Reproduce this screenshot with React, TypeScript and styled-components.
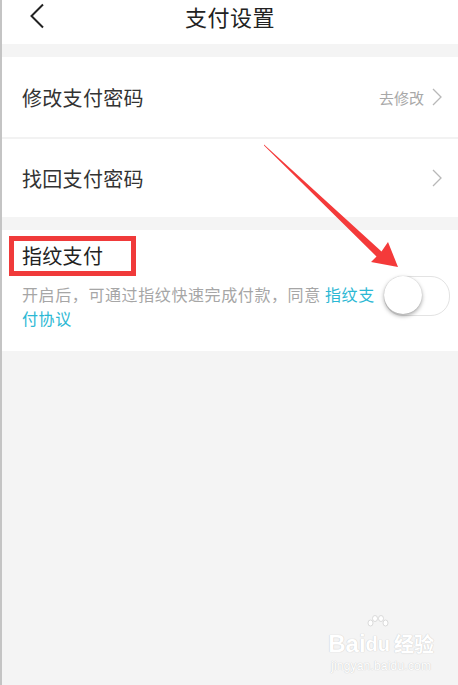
import React from "react";
import styled, { createGlobalStyle } from "styled-components";

const Global = createGlobalStyle`
  html, body { margin: 0; padding: 0; background: #f4f4f4; }
  body { font-family: "Noto Sans CJK SC", "Noto Sans", sans-serif; }
`;

const Page = styled.div`
  position: relative;
  width: 458px;
  height: 685px;
  background: #f4f4f4;
  border-left: 2px solid #c4c4c4;
  box-sizing: border-box;
  overflow: hidden;
`;

const Header = styled.header`
  height: 44px;
  box-sizing: border-box;
  padding-top: 2px;
  background: #fff;
  display: flex;
  align-items: flex-start;
  justify-content: center;
  position: relative;
`;

const BackButton = styled.div`
  position: absolute;
  left: 26px;
  top: 3px;
  width: 18px;
  height: 26px;
  display: flex;
`;

const Title = styled.h1`
  margin: 0;
  font-size: 22px;
  line-height: 28px;
  font-weight: 400;
  color: #222;
  letter-spacing: 0.5px;
`;

const Gap = styled.div<{ $h: number }>`
  height: ${(p) => p.$h}px;
`;

const Group = styled.section`
  background: #fff;
  display: flex;
  flex-direction: column;
`;

const Row = styled.div<{ $h: number; $divider?: boolean }>`
  height: ${(p) => p.$h}px;
  display: flex;
  align-items: center;
  padding: 0 16px 0 20px;
  border-bottom: ${(p) => (p.$divider ? "2px solid #f2f2f2" : "none")};
`;

const RowLabel = styled.span`
  flex: 1;
  font-size: 20px;
  color: #333;
  letter-spacing: 0.3px;
`;

const RowHint = styled.span`
  font-size: 15px;
  color: #a8a8a8;
  margin-right: 8px;
`;

const Chevron = () => (
  <svg width="10" height="18" viewBox="0 0 10 18">
    <path d="M1 1 L9 9 L1 17" fill="none" stroke="#b8b8b8" strokeWidth="1.3" />
  </svg>
);

const FingerRow = styled.div`
  height: 121px;
  display: flex;
  align-items: center;
  padding: 0 8px 0 20px;
`;

const FingerText = styled.div`
  flex: 1;
  display: flex;
  flex-direction: column;
  margin-top: -16px;
`;

const Highlight = styled.div`
  align-self: flex-start;
  margin-left: -13px;
  border: 5px solid #f03a3a;
  padding: 1px 28px 1px 8px;
  font-size: 20px;
  color: #222;
  line-height: 28px;
  letter-spacing: 0.3px;
`;

const Desc = styled.p`
  margin: 6px 0 0;
  font-size: 16px;
  line-height: 24px;
  color: #a6a6a6;
  letter-spacing: 0.6px;
`;

const Link = styled.span`
  color: #2cb8d4;
`;

const Toggle = styled.div`
  position: relative;
  width: 64px;
  height: 38px;
  border-radius: 19px;
  border: 1.5px solid #e3e3e3;
  background: #fff;
  margin-left: 6px;
  margin-top: 10px;
  flex-shrink: 0;
`;

const Knob = styled.div`
  position: absolute;
  left: -1px;
  top: -1px;
  width: 38px;
  height: 38px;
  border-radius: 50%;
  background: #fff;
  box-shadow: 0 2px 4px rgba(0, 0, 0, 0.35), 0 0 1px rgba(0, 0, 0, 0.2);
`;

const Arrow = styled.svg`
  position: absolute;
  left: 0;
  top: 0;
  pointer-events: none;
`;

const Watermark = styled.div`
  position: absolute;
  right: 24px;
  bottom: 12px;
  display: flex;
  flex-direction: column;
  align-items: center;
  color: #fff;
  text-shadow: 0 0 1px #cfcfcf, 0 0 1px #cfcfcf;
  font-family: "Liberation Sans", sans-serif;
`;

const WmTop = styled.div`
  display: flex;
  align-items: flex-end;
  font-size: 24px;
  font-weight: 700;
  line-height: 26px;
`;

const WmDu = styled.span`
  display: flex;
  flex-direction: column;
  align-items: center;
  font-size: 20px;
`;

const WmCn = styled.span`
  font-family: "Noto Sans CJK SC", sans-serif;
  font-size: 20px;
  margin-left: 4px;
`;

const WmUrl = styled.div`
  font-size: 12px;
  letter-spacing: 0.2px;
  margin-top: 2px;
`;

const Paw = () => (
  <svg width="22" height="16" viewBox="0 0 22 16">
    <g fill="#fff" stroke="#d2d2d2" strokeWidth="0.8">
      <ellipse cx="3.5" cy="8" rx="2.5" ry="3" />
      <ellipse cx="8" cy="3.5" rx="2.5" ry="3" />
      <ellipse cx="14" cy="3.5" rx="2.5" ry="3" />
      <ellipse cx="18.5" cy="8" rx="2.5" ry="3" />
    </g>
  </svg>
);

export default function App() {
  return (
    <>
      <Global />
      <Page>
        <Header>
          <BackButton>
            <svg width="18" height="26" viewBox="0 0 18 26">
              <path d="M15 1.5 L3.5 13 L15 24.5" fill="none" stroke="#222" strokeWidth="2" />
            </svg>
          </BackButton>
          <Title>支付设置</Title>
        </Header>
        <Gap $h={13} />
        <Group>
          <Row $h={80} $divider>
            <RowLabel>修改支付密码</RowLabel>
            <RowHint>去修改</RowHint>
            <Chevron />
          </Row>
          <Row $h={78}>
            <RowLabel>找回支付密码</RowLabel>
            <Chevron />
          </Row>
        </Group>
        <Gap $h={13} />
        <Group>
          <FingerRow>
            <FingerText>
              <Highlight>指纹支付</Highlight>
              <Desc>
                开启后，可通过指纹快速完成付款，同意 <Link>指纹支付协议</Link>
              </Desc>
            </FingerText>
            <Toggle>
              <Knob />
            </Toggle>
          </FingerRow>
        </Group>
        <Arrow width="458" height="685" viewBox="0 0 458 685">
          <polygon
            points="262,144.5 379.5,251.5 386,242 396,267 369,262 374.5,256.5 262,145.5"
            fill="#f43a3a"
          />
        </Arrow>
        <Watermark>
          <WmTop>
            Bai
            <WmDu>
              <Paw />
              du
            </WmDu>
            <WmCn>经验</WmCn>
          </WmTop>
          <WmUrl>jingyan.baidu.com</WmUrl>
        </Watermark>
      </Page>
    </>
  );
}
